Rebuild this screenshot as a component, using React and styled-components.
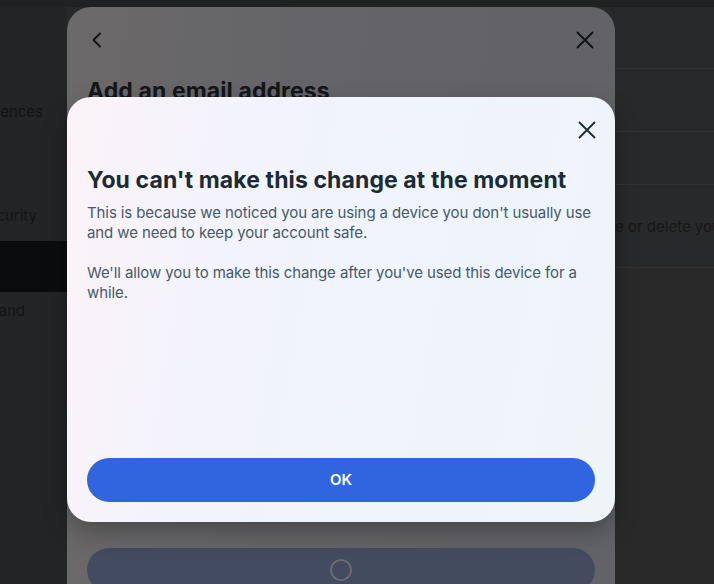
import React from "react";
import styled, { createGlobalStyle } from "styled-components";

const Global = createGlobalStyle`
  html, body { margin: 0; padding: 0; height: 100%; overflow: hidden; }
  body { background: #262728; font-family: Inter, "Noto Sans", sans-serif; }
  #root { height: 100%; }
`;

const Page = styled.div`
  display: flex;
  height: 584px;
  background: #262728;
`;

const TopStrip = styled.div`
  position: fixed;
  left: 0; right: 0; top: 0;
  height: 7px;
  background: #202123;
`;

const Sidebar = styled.nav`
  width: 67px;
  flex: none;
  background: #232426;
  display: flex;
  flex-direction: column;
  padding-top: 86px;
  overflow: hidden;
`;

const SideItem = styled.div`
  height: ${(p) => p.$h || 51}px;
  margin-top: ${(p) => p.$mt || 0}px;
  display: flex;
  align-items: ${(p) => (p.$top ? "flex-start" : "center")};
  padding-top: ${(p) => (p.$top ? 9 : 0)}px;
  box-sizing: border-box;
  justify-content: flex-end;
  padding-right: ${(p) => p.$pr || 0}px;
  white-space: nowrap;
  font-size: 15px;
  color: #131415;
  background: ${(p) => (p.$active ? "#0b0c0e" : "transparent")};
`;

const Content = styled.main`
  flex: 1;
  background: #28292a;
  display: flex;
  flex-direction: column;
  padding-left: 548px;
  padding-top: 68px;
`;

const Row = styled.div`
  height: ${(p) => p.$h}px;
  border-top: 1px solid #323335;
  display: flex;
  align-items: center;
  white-space: nowrap;
  overflow: hidden;
  font-size: 15px;
  color: #161718;
  background: ${(p) => p.$bg || "transparent"};
`;

const Layer = styled.div`
  position: fixed;
  inset: 0;
  padding-left: 67px;
  padding-top: ${(p) => p.$top}px;
  pointer-events: none;
`;

const BackDialog = styled.section`
  width: 548px;
  height: 640px;
  border-radius: 24px;
  background: linear-gradient(95deg, #6b6969 0%, #656468 40%, #626367 100%);
  box-sizing: border-box;
  padding: 0 20px;
  display: flex;
  flex-direction: column;
`;

const BackHeader = styled.div`
  height: 66px;
  display: flex;
  align-items: center;
  justify-content: space-between;
  margin: 0 -2px;
`;

const IconBox = styled.div`
  width: 24px;
  height: 24px;
  display: flex;
  align-items: center;
  justify-content: center;
  color: ${(p) => p.$color};
`;

const BackTitle = styled.h2`
  margin: 4px 0 0;
  font-size: 23px;
  line-height: 28px;
  font-weight: 700;
  color: #141618;
  letter-spacing: 0.1px;
`;

const BackButton = styled.div`
  margin-top: 443px;
  height: 44px;
  border-radius: 22px;
  background: linear-gradient(90deg, #434b62, #444b5e);
  display: flex;
  align-items: center;
  justify-content: center;
`;

const Dialog = styled.section`
  width: 548px;
  height: 425px;
  border-radius: 24px;
  background: linear-gradient(100deg, #fcf3f8 0%, #f3f3fc 28%, #eff4fd 60%, #eef5f9 100%);
  box-shadow: 0 10px 24px rgba(0, 0, 0, 0.28);
  box-sizing: border-box;
  padding: 0 20px 20px;
  display: flex;
  flex-direction: column;
`;

const DialogTop = styled.div`
  height: 69px;
  display: flex;
  justify-content: flex-end;
  padding-top: 21px;
  box-sizing: border-box;
  margin-right: -4px;
`;

const Title = styled.h1`
  margin: 0;
  font-size: 23px;
  line-height: 28px;
  font-weight: 700;
  color: #1c2b33;
  letter-spacing: 0.1px;
`;

const Body = styled.div`
  margin-top: 9px;
  font-size: 15px;
  line-height: 20px;
  letter-spacing: -0.1px;
  color: #465a69;
  p { margin: 0 0 20px; }
`;

const Spacer = styled.div`
  flex: 1;
`;

const PrimaryButton = styled.button`
  height: 44px;
  border: none;
  border-radius: 22px;
  background: #3165df;
  color: #fff;
  font-family: inherit;
  font-size: 15px;
  font-weight: 600;
  cursor: pointer;
  padding-bottom: 2px;
`;

const CloseIcon = () => (
  <svg width="18" height="18" viewBox="0 0 18 18" fill="none" stroke="currentColor" strokeWidth="1.8" strokeLinecap="round">
    <path d="M1.5 1.5 L16.5 16.5 M16.5 1.5 L1.5 16.5" />
  </svg>
);

const BackIcon = () => (
  <svg width="12" height="16" viewBox="0 0 12 16" fill="none" stroke="currentColor" strokeWidth="1.8" strokeLinecap="round" strokeLinejoin="round">
    <path d="M9 1.5 L2.5 8 L9 14.5" />
  </svg>
);

const Spinner = () => (
  <svg width="22" height="22" viewBox="0 0 22 22" fill="none">
    <circle cx="11" cy="11" r="10" stroke="#6f6f70" strokeWidth="1.6" />
  </svg>
);

export default function App() {
  return (
    <>
      <Global />
      <Page>
        <Sidebar>
          <SideItem $pr={24}>Preferences</SideItem>
          <SideItem $pr={30} $mt={53}>Password and security</SideItem>
          <SideItem $active />
          <SideItem $top $pr={42}>Ireland</SideItem>
        </Sidebar>
        <Content>
          <Row $h={63} />
          <Row $h={53} />
          <Row $h={83}>e or delete your account</Row>
          <Row $h={320} $bg="#29292a" />
        </Content>
      </Page>
      <TopStrip />
      <Layer $top={7}>
        <BackDialog>
          <BackHeader>
            <IconBox $color="#111214"><BackIcon /></IconBox>
            <IconBox $color="#111214"><CloseIcon /></IconBox>
          </BackHeader>
          <BackTitle>Add an email address</BackTitle>
          <BackButton><Spinner /></BackButton>
        </BackDialog>
      </Layer>
      <Layer $top={97}>
        <Dialog role="dialog">
          <DialogTop>
            <IconBox $color="#1c2b33"><CloseIcon /></IconBox>
          </DialogTop>
          <Title>You can't make this change at the moment</Title>
          <Body>
            <p>This is because we noticed you are using a device you don't usually use and we need to keep your account safe.</p>
            <p>We'll allow you to make this change after you've used this device for a while.</p>
          </Body>
          <Spacer />
          <PrimaryButton>OK</PrimaryButton>
        </Dialog>
      </Layer>
    </>
  );
}
